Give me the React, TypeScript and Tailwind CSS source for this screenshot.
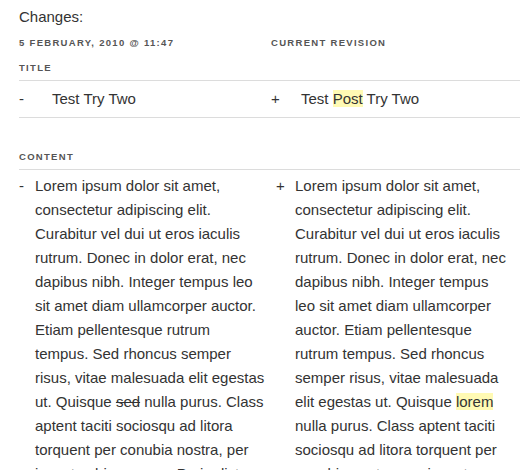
import React from "react";

const hl = "bg-[#fffab4]";

const leftLines: React.ReactNode[] = [
  "Lorem ipsum dolor sit amet,",
  "consectetur adipiscing elit.",
  "Curabitur vel dui ut eros iaculis",
  "rutrum. Donec in dolor erat, nec",
  "dapibus nibh. Integer tempus leo",
  "sit amet diam ullamcorper auctor.",
  "Etiam pellentesque rutrum",
  "tempus. Sed rhoncus semper",
  "risus, vitae malesuada elit egestas",
  <>
    ut. Quisque <span className="line-through">sed</span> nulla purus. Class
  </>,
  "aptent taciti sociosqu ad litora",
  "torquent per conubia nostra, per",
  "inceptos himenaeos. Proin dictum",
];

const rightLines: React.ReactNode[] = [
  "Lorem ipsum dolor sit amet,",
  "consectetur adipiscing elit.",
  "Curabitur vel dui ut eros iaculis",
  "rutrum. Donec in dolor erat, nec",
  "dapibus nibh. Integer tempus",
  "leo sit amet diam ullamcorper",
  "auctor. Etiam pellentesque",
  "rutrum tempus. Sed rhoncus",
  "semper risus, vitae malesuada",
  <>
    elit egestas ut. Quisque <span className={hl}>lorem</span>
  </>,
  "nulla purus. Class aptent taciti",
  "sociosqu ad litora torquent per",
  "conubia nostra, per inceptos",
];

function Label({ children, className = "" }: { children: React.ReactNode; className?: string }) {
  return (
    <div
      className={`text-[9.5px] leading-[12px] font-bold tracking-[1.3px] uppercase text-[#555] whitespace-nowrap ${className}`}
    >
      {children}
    </div>
  );
}

function Rule({ className = "" }: { className?: string }) {
  return <div className={`h-px bg-[#dcdcdc] ${className}`} />;
}

export default function App() {
  return (
    <div className="w-[520px] h-[470px] overflow-hidden bg-white pl-[19px] text-[#333] font-['Liberation_Sans',Arial,sans-serif]">
      <div className="pt-[8px] h-[26px]">
        <div className="text-[15px] leading-[18px]">Changes:</div>
      </div>

      <div className="mt-[11px] flex">
        <Label className="w-[252px]">5 February, 2010 @ 11:47</Label>
        <Label>Current Revision</Label>
      </div>

      <Label className="mt-[13px]">Title</Label>
      <Rule className="mt-[6px]" />

      <div className="flex h-[36px] leading-[36px] text-[15px] whitespace-nowrap">
        <div className="w-[33px]">-</div>
        <div className="w-[219px]">Test Try Two</div>
        <div className="w-[30px]">+</div>
        <div>
          Test <span className={hl}>Post</span> Try Two
        </div>
      </div>
      <Rule />

      <Label className="mt-[33px]">Content</Label>
      <Rule className="mt-[6px]" />

      <div className="mt-[4px] flex text-[15px] leading-[24px] whitespace-nowrap">
        <div className="w-[16px]">-</div>
        <div className="w-[241px]">
          {leftLines.map((l, i) => (
            <div key={i}>{l}</div>
          ))}
        </div>
        <div className="w-[19px]">+</div>
        <div>
          {rightLines.map((l, i) => (
            <div key={i}>{l}</div>
          ))}
        </div>
      </div>
    </div>
  );
}
